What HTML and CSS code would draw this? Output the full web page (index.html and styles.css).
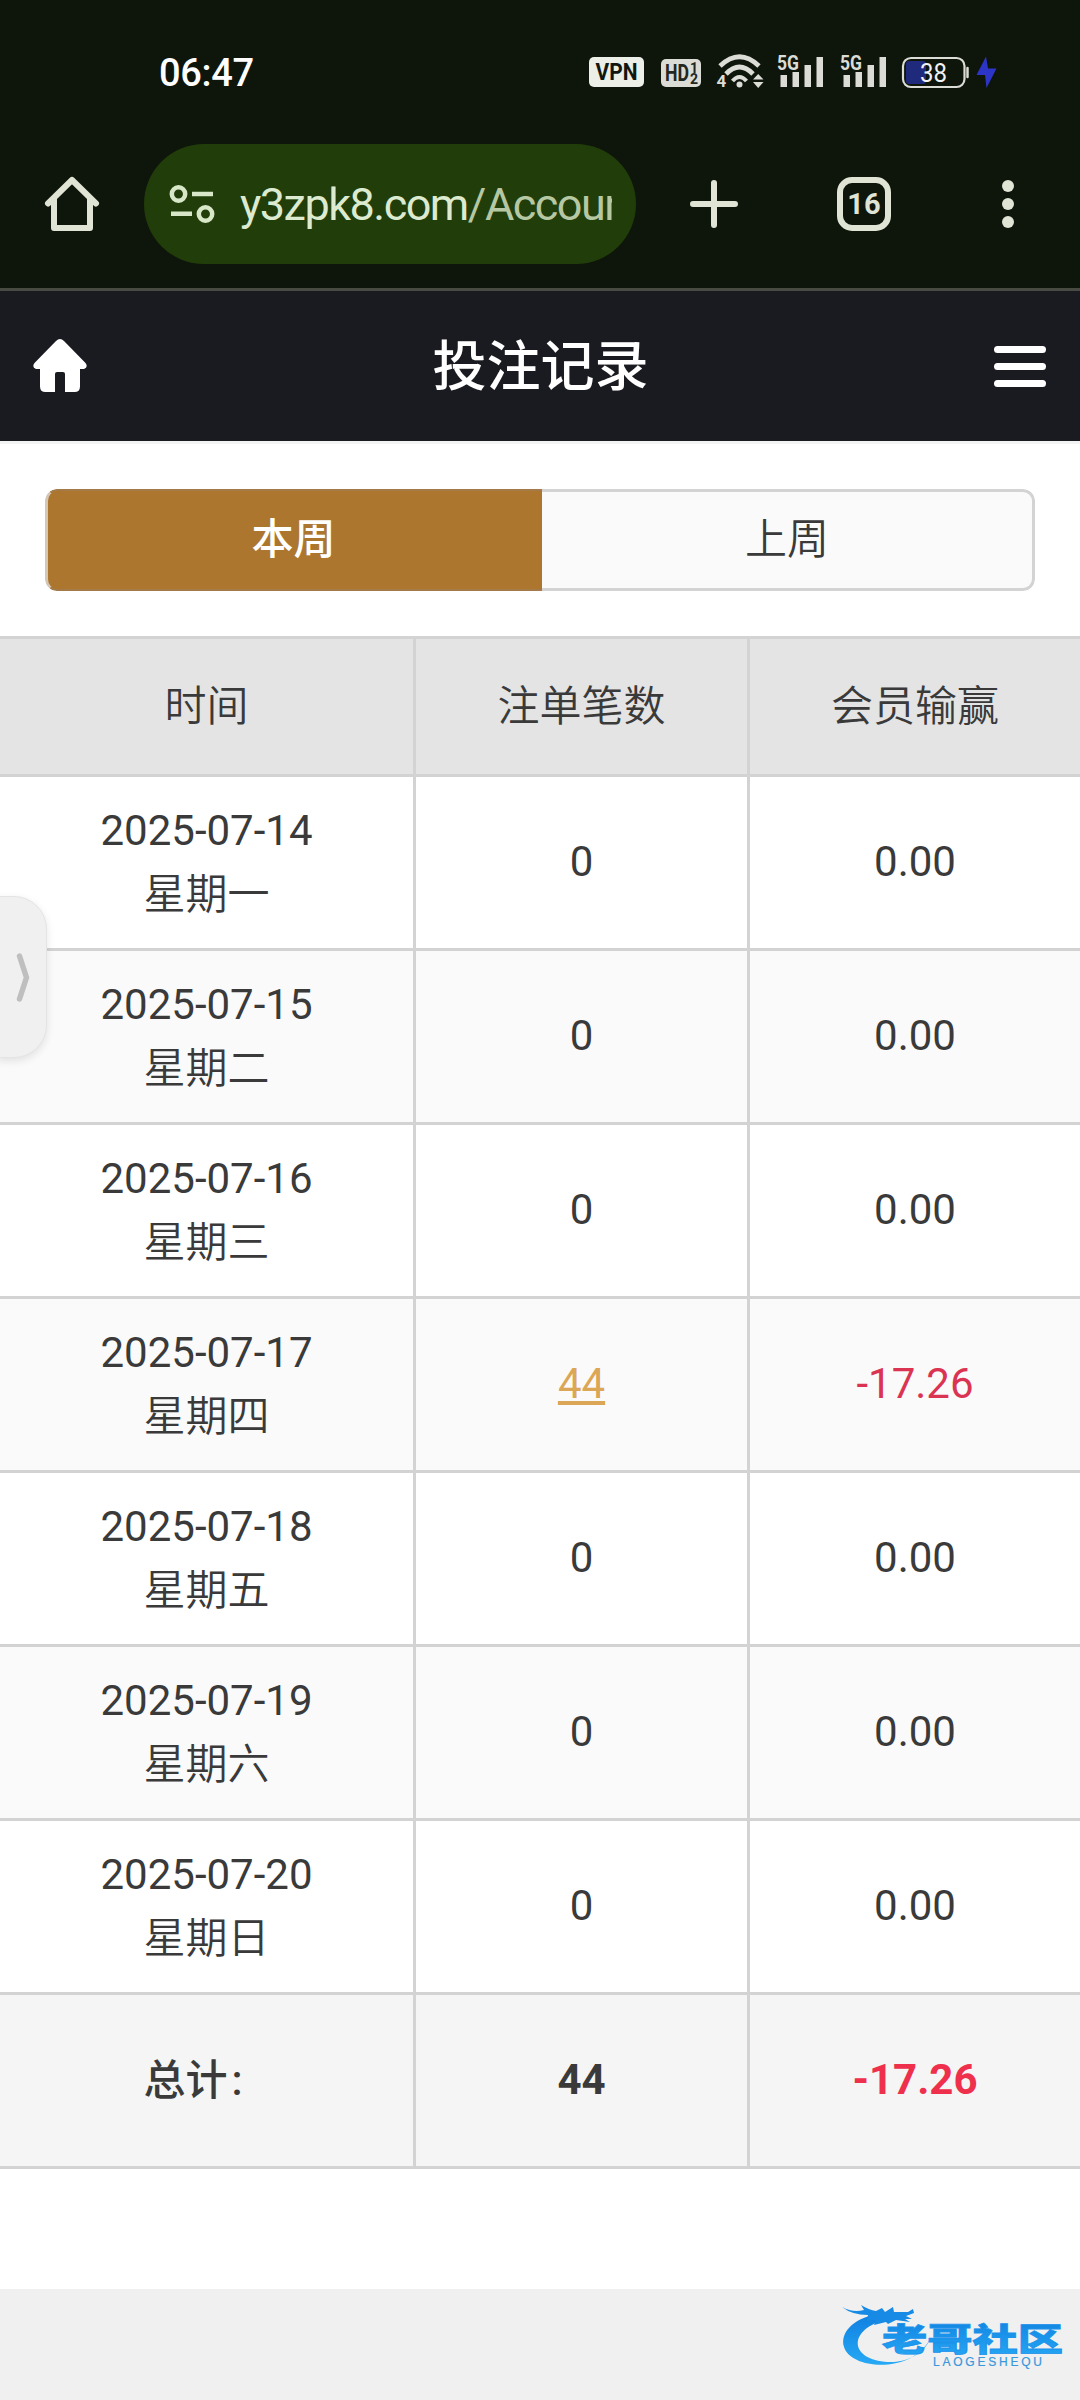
FILE: index.html
```html
<!DOCTYPE html>
<html lang="zh-CN">
<head>
<meta charset="utf-8">
<title>投注记录</title>
<link rel="stylesheet" href="styles.css">
</head>
<body>
<div class="browser">
  <div class="status">
    <span class="clock">06:47</span>
    <svg class="status-icons" width="412" height="40" viewBox="588 52 412 40">
      <rect x="589" y="57" width="55" height="30" rx="5" fill="#eceee8"/>
      <text x="616.5" y="80" class="st vpn" textLength="42" lengthAdjust="spacingAndGlyphs">VPN</text>
      <rect x="661" y="59" width="40" height="28" rx="5" fill="#dadcd5"/>
      <text x="677" y="81" class="st hd" textLength="24" lengthAdjust="spacingAndGlyphs">HD</text>
      <text x="694" y="72.500" class="st frac">1</text>
      <text x="694" y="84" class="st frac">2</text>
      <g fill="none" stroke="#dadcd5" stroke-width="4.800">
        <path d="M720 66Q739.500 47.500 759 66"/>
        <path d="M726 74Q739.500 60 753 74"/>
        <path d="M732.500 81Q739.500 73 746.500 81" stroke-width="4"/>
      </g>
      <circle cx="739.500" cy="84.500" r="3" fill="#dadcd5"/>
      <text x="721.500" y="86.500" class="st four">4</text>
      <path d="M753 79.500h10.500L758.200 74zM753 82h10.500L758.200 88z" fill="#dadcd5"/>
      <g id="signal">
        <text x="788" y="70" class="st five" textLength="22" lengthAdjust="spacingAndGlyphs">5G</text>
        <path d="M780.500 75h6.500v12h-6.500zM792.500 72h6.500v15h-6.500zM804.500 65h6.500v22h-6.500zM816.500 57h6.500v30h-6.500z" fill="#dadcd5"/>
      </g>
      <use href="#signal" x="63"/>
      <rect x="906" y="61" width="20" height="23" rx="3" fill="#202a7c"/>
      <rect x="903" y="58" width="61.500" height="29" rx="8" fill="none" stroke="#dadcd5" stroke-width="2.200"/>
      <path d="M967.500 68v9" stroke="#dadcd5" stroke-width="2.500" stroke-linecap="round"/>
      <text x="933.500" y="81.500" class="st pct" textLength="27" lengthAdjust="spacingAndGlyphs">38</text>
      <path d="M986 56.500L976.500 75H985l1.500 13L996.500 68.500H988z" fill="#2d35c8"/>
    </svg>
  </div>
  <div class="toolbar">
    <svg class="tb-home" width="56" height="56" viewBox="44 176 56 56" fill="none" stroke="#dfe4d5" stroke-width="6" stroke-linecap="round" stroke-linejoin="round"><path d="M48 203.500L72 180l24 23.500"/><path d="M54 199v29h36v-29"/></svg>
    <div class="omnibox">
      <svg width="46" height="40" viewBox="169 184 46 40" fill="none" stroke="#d7e7c8" stroke-width="4.500"><circle cx="178.500" cy="194" r="6.700"/><path d="M192 194h21M171 213.700h21"/><circle cx="205.500" cy="214" r="6.700"/></svg>
      <div class="url">y3zpk8.com<span>/Account</span></div>
    </div>
    <svg class="tb-plus" width="48" height="48" viewBox="0 0 48 48" stroke="#dfe4d5" stroke-width="6" stroke-linecap="round"><path d="M24 3v42M3 24h42"/></svg>
    <div class="count">16</div>
    <svg class="tb-more" width="12" height="48" viewBox="0 0 12 48" fill="#dfe4d5"><circle cx="6" cy="6" r="6"/><circle cx="6" cy="24" r="6"/><circle cx="6" cy="42" r="6"/></svg>
  </div>
</div>
<header class="header">
  <svg width="54" height="54" viewBox="0 0 54 54" fill="#fff"><path d="M23 2Q27-2 31 2L52.500 24Q55.500 28 51 30H47V47.500Q47 53 41.500 53H32V35Q32 33 30 33H24Q22 33 22 35V53H12.500Q7 53 7 47.500V30H3Q-1.500 28 1.500 24Z"/></svg>
  <h1>投注记录</h1>
  <div class="menu"><i></i><i></i><i></i></div>
</header>
<main class="main">
  <div class="tabs"><div class="tab active">本周</div><div class="tab">上周</div></div>
  <div class="table">
    <div class="row head"><div>时间</div><div>注单笔数</div><div>会员输赢</div></div>
    <div class="row"><div class="day"><span>2025-07-14</span><b>星期一</b></div><div>0</div><div>0.00</div></div>
    <div class="row alt"><div class="day"><span>2025-07-15</span><b>星期二</b></div><div>0</div><div>0.00</div></div>
    <div class="row"><div class="day"><span>2025-07-16</span><b>星期三</b></div><div>0</div><div>0.00</div></div>
    <div class="row alt"><div class="day"><span>2025-07-17</span><b>星期四</b></div><div><a class="link">44</a></div><div class="loss">-17.26</div></div>
    <div class="row"><div class="day"><span>2025-07-18</span><b>星期五</b></div><div>0</div><div>0.00</div></div>
    <div class="row alt"><div class="day"><span>2025-07-19</span><b>星期六</b></div><div>0</div><div>0.00</div></div>
    <div class="row"><div class="day"><span>2025-07-20</span><b>星期日</b></div><div>0</div><div>0.00</div></div>
    <div class="row total"><div class="label"><span class="sum">总计<span class="colon">:</span></span></div><div>44</div><div class="loss">-17.26</div></div>
  </div>
</main>
<footer class="footer">
  <svg width="230" height="80" viewBox="0 0 230 80">
    <defs>
      <linearGradient id="blue" x1="0" y1="0" x2="0" y2="1"><stop offset="0" stop-color="#0f7fe0"/><stop offset="1" stop-color="#27a9f5"/></linearGradient>
    </defs>
    <path d="M37 13C12 18 0 32 4 46C11 69 72 73 90 38C83 55 63 62 48 61C10 59 7 30 44 19Z" fill="url(#blue)"/>
    <path d="M2 6Q13 12 24 9L21 4Q29 9 36 10L42 7L45 11L53 6L54 11L68 11L73 8L74 12L66 15L72 18L65 18L70 21L56 19L48 23L46 21L34 24L36 19L27 20L28 14Q12 14 2 6Z" fill="#168ae5"/>
    <text x="42" y="50" class="brand" textLength="181" lengthAdjust="spacingAndGlyphs" fill="url(#blue)">老哥社区</text>
    <text x="93" y="65" class="latin" textLength="109" lengthAdjust="spacing">LAOGESHEQU</text>
  </svg>
</footer>
<div class="handle"><svg width="14" height="50" viewBox="0 0 14 50" fill="none" stroke="#bfbfbf" stroke-width="5.500" stroke-linecap="round" stroke-linejoin="round"><path d="M3.500 4L10.500 25.500L3.500 47"/></svg></div>
</body>
</html>
```
FILE: styles.css
```css
* { box-sizing: border-box; }
body {
  position: relative;
  margin: 0;
  width: 1080px;
  height: 2400px;
  display: flex;
  flex-direction: column;
  overflow: hidden;
  background: #fff;
  color: #3a3a3a;
  font: 42px/63px Roboto, "Noto Sans CJK SC", sans-serif;
}
svg { display: block; flex: none; }

.browser { height: 291px; background: #0e150b; border-bottom: 3px solid #484b41; }
.status { height: 144px; padding: 0 80px 0 159px; display: flex; align-items: center; justify-content: space-between; }
.clock { padding-top: 2px; font-size: 38px; font-weight: 500; color: #fff; line-height: 40px; letter-spacing: -.3px; }
.st { font-family: Roboto, sans-serif; text-anchor: middle; fill: #dadcd5; }
.vpn { font-size: 23px; font-weight: 700; fill: #11170e; }
.hd { font-size: 23px; font-weight: 700; fill: #22271f; }
.frac { font-size: 14px; font-weight: 700; fill: #22271f; }
.four { font-size: 17px; font-weight: 700; }
.five { font-size: 20px; font-weight: 700; }
.pct { font-size: 25px; fill: #f0f1f4; }

.toolbar { height: 120px; padding: 0 66px 0 44px; display: flex; align-items: center; }
.omnibox { width: 492px; height: 120px; margin-left: 44px; padding: 0 24px 0 25px; border-radius: 60px; background: #213d09; display: flex; align-items: center; }
.url { width: 372px; margin-left: 25px; padding-top: 2px; overflow: hidden; white-space: nowrap; font-size: 45px; line-height: 60px; letter-spacing: -1.5px; color: #dcebcf; }
.url span { color: #b5c8a3; }
.tb-plus { margin-left: 54px; }
.count { width: 54px; height: 54px; margin-left: 99px; border: 6px solid #dfe4d5; border-radius: 15px; display: flex; align-items: center; justify-content: center; font-size: 29px; font-weight: 700; color: #dfe4d5; }
.tb-more { margin-left: auto; }

.header { height: 150px; padding: 0 34px 0 33px; display: flex; align-items: center; justify-content: space-between; background: #1a1b20; color: #fff; }
.header h1 { margin: 0; padding-top: 4px; font-size: 54px; font-weight: 500; line-height: 80px; }
.menu { width: 52px; display: flex; flex-direction: column; gap: 10px; }
.menu i { height: 7px; border-radius: 4px; background: #fff; }

.main { height: 1848px; border-top: 3px solid #f2f3f3; }
.tabs { margin: 45px 45px; height: 102px; display: grid; grid-template-columns: 497px 1fr; border-radius: 12px; overflow: hidden; }
.tab { display: flex; align-items: center; justify-content: center; padding-bottom: 1px; background: #fafafa; border: 3px solid #d3d3d3; border-left: 0; border-radius: 0 12px 12px 0; font-weight: 350; }
.tab.active { padding-right: 3px; background: #ac762e; color: #fff; font-weight: 500; border: solid #a47b48; border-width: 2px 0; border-left: 3px solid #d5c6b5; border-radius: 12px 0 0 12px; }

.table { border-top: 3px solid #d3d3d3; }
.row { height: 174px; display: grid; grid-template-columns: 416px 334px 330px; border-bottom: 3px solid #d3d3d3; text-align: center; }
.row > div { display: flex; align-items: center; justify-content: center; padding-bottom: 2px; border-right: 3px solid #d3d3d3; }
.row > div:last-child { border-right: 0; }
.row.head { height: 138px; background: #e4e4e4; font-weight: 350; }
.row.head > div, .row > .label { padding-bottom: 0; }
.row > .day { flex-direction: column; padding-bottom: 0; }
.day span { line-height: 61px; margin-bottom: 2px; }
.day b { font-weight: 350; }
.row.alt { background: #fafafa; }
.row.total { background: #f5f5f5; font-weight: 700; }
.sum { width: 126px; text-align: left; font-weight: 500; }
.colon { margin-left: 4px; }
.link { color: #dca657; text-decoration: underline; text-decoration-thickness: 4px; text-underline-offset: 3px; }
.row .loss { color: #db3452; }
.row.total .loss { color: #ee304d; }

.footer { flex: 1; padding: 12px 0 0 840px; background: #f0f0f0; }
.brand { font-family: "Noto Sans CJK SC", sans-serif; font-size: 32px; font-weight: 900; stroke: #1c93ea; stroke-width: .8; }
.latin { font: 12px "Liberation Sans", sans-serif; fill: #3a97dc; stroke: #3a97dc; stroke-width: .2; }

.handle { position: absolute; left: -3px; top: 896px; width: 50px; height: 162px; padding-right: 16px; display: flex; align-items: center; justify-content: flex-end; border-radius: 0 33px 33px 0; background: #f0f0f0; border: 1px solid #e4e4e4; box-shadow: 0 3px 8px rgba(0,0,0,.1); }
```
